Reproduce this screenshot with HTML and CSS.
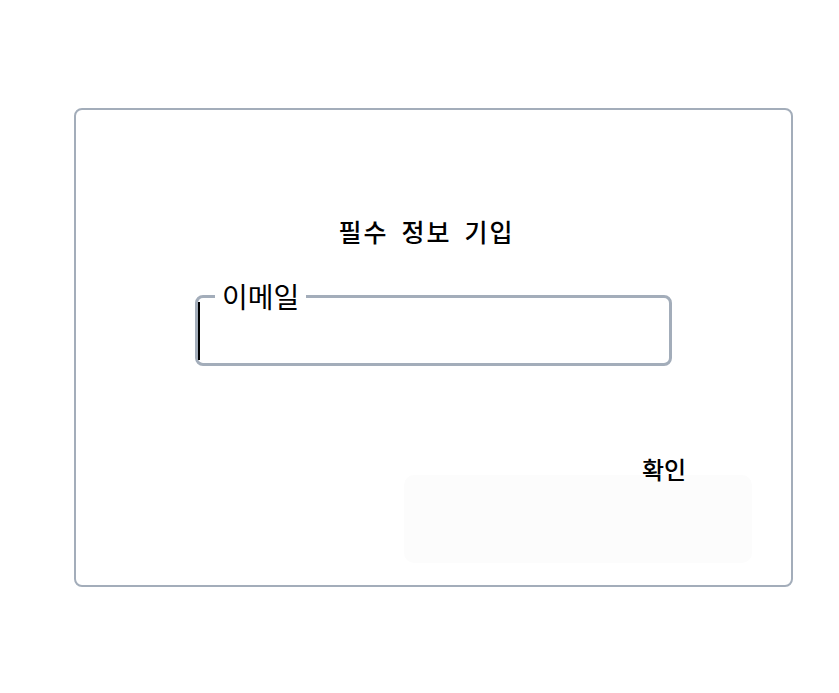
FILE: index.html
```html
<!DOCTYPE html>
<html lang="ko">
<head>
<meta charset="utf-8">
<link rel="stylesheet" href="styles.css">
</head>
<body>
<div class="page">
  <div class="card">
    <h1 class="title">필수 정보 기입</h1>
    <fieldset class="field">
      <legend class="legend">이메일</legend>
      <div class="input"><span class="caret"></span></div>
    </fieldset>
    <div class="actions">
      <div class="ghost"></div>
      <div class="confirm">확인</div>
    </div>
  </div>
</div>
</body>
</html>
```
FILE: styles.css
```css
* { box-sizing: border-box; }
html, body { margin: 0; padding: 0; background: #ffffff; }
body { font-family: "Noto Sans CJK KR", "Noto Sans", sans-serif; color: #000; }
.page { padding: 108px 0 0 74px; }
.card {
  width: 719px;
  height: 479px;
  border: 2px solid #a3adba;
  border-radius: 8px;
  padding: 105px 0 0 0;
  display: flex;
  flex-direction: column;
}
.title {
  margin: 0;
  font-size: 25px;
  font-weight: 500;
  line-height: 32px;
  text-align: center;
  padding-right: 14px;
  letter-spacing: 2px;
  word-spacing: 4px;
}
.field {
  margin: 36px 0 0 119px;
  width: 477px;
  border: 3px solid #a3adba;
  border-radius: 8px;
  padding: 0;
}
.legend {
  margin-left: 17px;
  padding: 0 7px;
  font-size: 28px;
  line-height: 27px;
}
.input { height: 61px; }
.caret {
  display: block;
  width: 2px;
  height: 58px;
  background: #000;
  margin-top: -8px;
}
.actions {
  position: relative;
  height: 120px;
  margin-top: 83px;
}
.confirm {
  position: absolute;
  left: 566px;
  top: 5px;
  font-size: 24px;
  line-height: 30px;
  font-weight: 500;
}
.ghost {
  position: absolute;
  left: 328px;
  top: 26px;
  width: 348px;
  height: 88px;
  background: #fcfcfc;
  border-radius: 10px;
}
```
